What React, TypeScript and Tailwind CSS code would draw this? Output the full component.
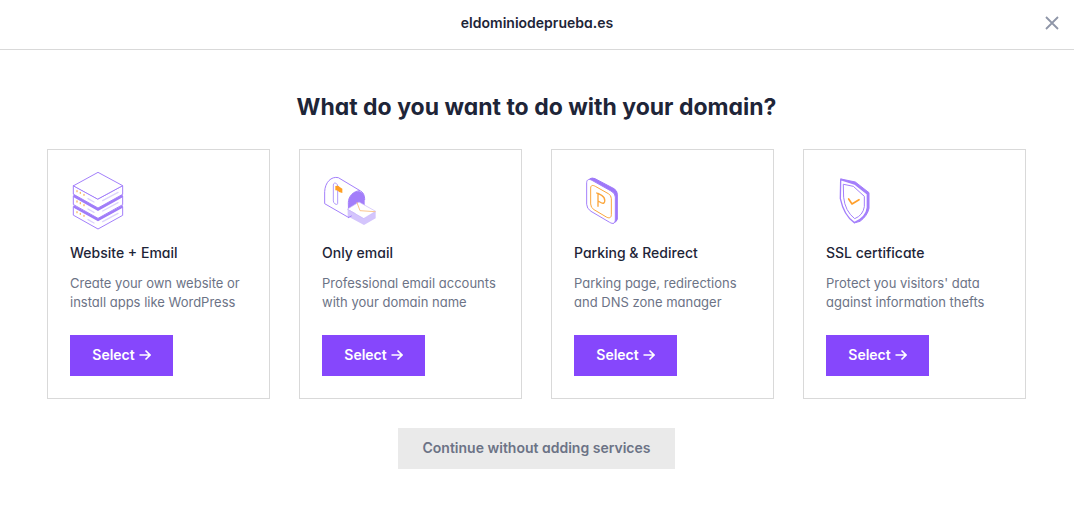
import type { ReactNode } from "react";

const purple = "#a37ffb";
const orange = "#fba63c";

function Icon({ children }: { children: ReactNode }) {
  return (
    <svg
      aria-hidden="true"
      className="h-[60px] w-[60px]"
      viewBox="30 15 180 180"
      fill="none"
      strokeLinejoin="round"
      strokeLinecap="round"
    >
      {children}
    </svg>
  );
}

function ServerLayer({ y }: { y: number }) {
  return (
    <g transform={`translate(0 ${y})`}>
      <path d="M41 62 114 102 188 62V88L114 129 41 88Z" fill="#fff" stroke={purple} strokeWidth="3" />
      <path d="M84 101 102 111M128 107 174 82" stroke="#ddd4fc" strokeWidth="4" />
      <path d="M51 77V80M61 82V85M72 88V91" stroke="#fbb765" strokeWidth="4" />
    </g>
  );
}

function ServerIcon() {
  return (
    <Icon>
      <ServerLayer y={63} />
      <path d="M41 120 114 160 188 120V128L114 169 41 128Z" fill="#a07cf8" />
      <ServerLayer y={31} />
      <path d="M41 88 114 128 188 88V97L114 138 41 97Z" fill="#a07cf8" />
      <ServerLayer y={0} />
      <path d="M41 62 114 22 188 62 114 102Z" fill="#fff" stroke={purple} strokeWidth="3" />
    </Icon>
  );
}

function MailboxIcon() {
  return (
    <Icon>
      <path d="M109 157V112C110 89 130 74 146 80C155 84 159 94 158 106V131L109 157Z" fill="#a37efa" />
      <path
        d="M109 157 38 116V80C39 52 58 33 79 38L144 77C124 78 109 94 109 112Z"
        fill="#fff"
        stroke={purple}
        strokeWidth="3"
      />
      <path d="M144 77C154 81 158 91 158 104" stroke={purple} strokeWidth="3" />
      <path d="M64 59C64 50 77 54 77 63V115C77 122 64 117 64 109Z" stroke="#b39bfb" strokeWidth="3" />
      <path d="M70 63Q80 61 83 66L91 71V84L81 81Q79 75 70 76Z" fill="#ff9f22" />
      <path d="M107 132 156 160 191 139V160L156 180 107 154Z" fill="#d4c5fc" />
      <path d="M107 132 141 111 191 139 156 160Z" fill="#fff" stroke="#c9b7fb" strokeWidth="2" />
      <path d="M135 113 144 137 189 140" stroke="#fbc68d" strokeWidth="3" />
      <path d="M109 158 118 153" stroke={purple} strokeWidth="3" />
    </Icon>
  );
}

function ParkingIcon() {
  return (
    <Icon>
      <path
        d="M78 41Q84 37 93 41L150 71Q160 77 160 88V162Q160 169 148 175Z"
        fill="#9e78f9"
        stroke="#9e78f9"
        strokeWidth="3"
      />
      <path
        d="M68 52C68 43 76 41 84 46L141 78Q154 85 154 96V162C154 176 147 178 137 172L81 139Q68 131 68 119Z"
        fill="#fff"
        stroke={purple}
        strokeWidth="3"
      />
      <path
        d="M80 68C80 60 87 60 94 64L133 86Q142 91 142 101V149C142 160 134 160 127 156L90 134Q80 128 80 118Z"
        stroke={orange}
        strokeWidth="3"
      />
      <path d="M102 124V85L113 91C126 99 125 119 113 114L102 108M98 84 102 86" stroke={orange} strokeWidth="4" />
    </Icon>
  );
}

function ShieldIcon() {
  return (
    <Icon>
      <path
        d="M75 42 118 51 159 83V130Q154 153 132 169L114 174 150 128V88L115 61Z"
        fill="#a47efb"
        stroke="#a47efb"
        strokeWidth="3"
      />
      <path
        d="M74 44 116 57 154 87V128Q151 158 115 173Q84 152 73 101Z"
        fill="#fff"
        stroke={purple}
        strokeWidth="4"
      />
      <path d="M83 58 112 64 145 94V125Q141 151 116 161Q87 138 83 98Z" stroke={purple} strokeWidth="3" />
      <path d="M98 102 108 117 129 104" stroke="#ff9f2b" strokeWidth="5" />
    </Icon>
  );
}

const services = [
  { title: "Website + Email", lines: ["Create your own website or", "install apps like WordPress"], icon: <ServerIcon /> },
  { title: "Only email", lines: ["Professional email accounts", "with your domain name"], icon: <MailboxIcon /> },
  { title: "Parking & Redirect", lines: ["Parking page, redirections", "and DNS zone manager"], icon: <ParkingIcon /> },
  { title: "SSL certificate", lines: ["Protect you visitors' data", "against information thefts"], icon: <ShieldIcon /> },
];

function Arrow() {
  return (
    <svg aria-hidden="true" className="h-3 w-3" viewBox="0 0 12 12" fill="none" stroke="currentColor" strokeWidth="1.6">
      <path d="M0.5 6H11M6.5 1.5 11 6 6.5 10.5" />
    </svg>
  );
}

export default function App() {
  return (
    <div className="min-h-screen bg-white font-['Inter',sans-serif] text-[#1e2538] [font-feature-settings:'cv11']">
      <header className="grid h-[50px] grid-cols-[1fr_auto_1fr] items-center border-b border-[#d9d9d9] px-3 pb-1">
        <span />
        <span className="text-sm leading-5 font-semibold">eldominiodeprueba.es</span>
        <button type="button" aria-label="Close" className="justify-self-end p-[3px] text-[#8f96a8]">
          <svg className="h-[14px] w-[14px]" viewBox="0 0 14 14" fill="none" stroke="currentColor" strokeWidth="1.8">
            <path d="M1 1 13 13M13 1 1 13" />
          </svg>
        </button>
      </header>
      <main className="flex flex-col items-center pt-[41px] pr-12 pb-10 pl-[47px]">
        <h1 className="text-center text-[23px] leading-8 font-bold">What do you want to do with your domain?</h1>
        <div className="mt-[26px] grid w-full grid-cols-4 gap-[29px]">
          {services.map(({ title, lines, icon }) => (
            <section
              key={title}
              className="flex flex-col items-start border border-[#d9d9d9] px-[22px] pt-5 pb-[22px]"
            >
              {icon}
              <h2 className="mt-[13px] text-sm leading-5 font-medium whitespace-nowrap">{title}</h2>
              <p className="mt-[11px] text-[13px] leading-[19px] whitespace-nowrap text-[#6c7386]">
                {lines[0]}
                <br />
                {lines[1]}
              </p>
              <button
                type="button"
                className="mt-[23px] flex h-[41px] w-[103px] items-center justify-center gap-1 bg-[#8647fc] pb-0.5 text-sm font-semibold text-white"
              >
                Select
                <Arrow />
              </button>
            </section>
          ))}
        </div>
        <button
          type="button"
          className="mt-[29px] h-[41px] bg-[#eaeaea] px-[25px] pb-0.5 text-sm font-semibold text-[#6c7386]"
        >
          Continue without adding services
        </button>
      </main>
    </div>
  );
}
